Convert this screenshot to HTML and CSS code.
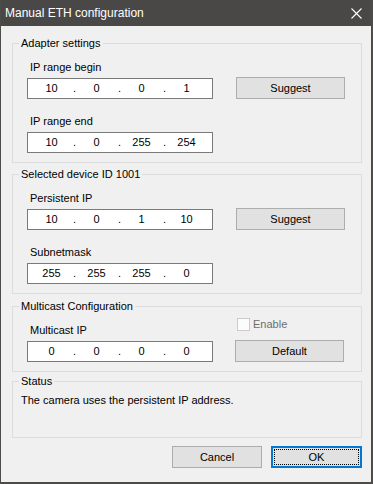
FILE: index.html
```html
<!DOCTYPE html>
<html>
<head>
<meta charset="utf-8">
<link rel="stylesheet" href="styles.css">
</head>
<body>
<div class="window">
  <div class="titlebar">
    <span class="title">Manual ETH configuration</span>
    <svg class="close" width="11" height="11" viewBox="0 0 11 11"><path d="M0.5 0.5L10.5 10.5M10.5 0.5L0.5 10.5" stroke="#ffffff" stroke-width="1.1" fill="none"/></svg>
  </div>
  <div class="content">
    <fieldset class="group g1">
      <legend>Adapter settings</legend>
      <div class="body">
        <div class="row">
          <div class="col">
            <div class="label">IP range begin</div>
            <div class="ip"><span class="oct">10</span><span class="dot">.</span><span class="oct">0</span><span class="dot">.</span><span class="oct">0</span><span class="dot">.</span><span class="oct">1</span></div>
          </div>
          <button class="btn side">Suggest</button>
        </div>
        <div class="row next">
          <div class="col">
            <div class="label">IP range end</div>
            <div class="ip"><span class="oct">10</span><span class="dot">.</span><span class="oct">0</span><span class="dot">.</span><span class="oct">255</span><span class="dot">.</span><span class="oct">254</span></div>
          </div>
        </div>
      </div>
    </fieldset>

    <fieldset class="group g2">
      <legend>Selected device ID 1001</legend>
      <div class="body">
        <div class="row">
          <div class="col">
            <div class="label">Persistent IP</div>
            <div class="ip"><span class="oct">10</span><span class="dot">.</span><span class="oct">0</span><span class="dot">.</span><span class="oct">1</span><span class="dot">.</span><span class="oct">10</span></div>
          </div>
          <button class="btn side">Suggest</button>
        </div>
        <div class="row next">
          <div class="col">
            <div class="label">Subnetmask</div>
            <div class="ip"><span class="oct">255</span><span class="dot">.</span><span class="oct">255</span><span class="dot">.</span><span class="oct">255</span><span class="dot">.</span><span class="oct">0</span></div>
          </div>
        </div>
      </div>
    </fieldset>

    <fieldset class="group g3">
      <legend>Multicast Configuration</legend>
      <div class="body">
        <div class="row mrow">
          <div class="col">
            <div class="label">Multicast IP</div>
            <div class="ip"><span class="oct">0</span><span class="dot">.</span><span class="oct">0</span><span class="dot">.</span><span class="oct">0</span><span class="dot">.</span><span class="oct">0</span></div>
          </div>
          <div class="rcol">
            <div class="check"><span class="box"></span><span class="ctext">Enable</span></div>
            <button class="btn side dflt">Default</button>
          </div>
        </div>
      </div>
    </fieldset>

    <fieldset class="group status">
      <legend>Status</legend>
      <div class="sbody">The camera uses the persistent IP address.</div>
    </fieldset>

    <div class="footer">
      <button class="btn dlg">Cancel</button>
      <button class="btn dlg ok">OK</button>
    </div>
  </div>
</div>
</body>
</html>
```
FILE: styles.css
```css
html, body {
  margin: 0;
  padding: 0;
  background: #f0f0f0;
}
.window {
  width: 373px;
  height: 484px;
  box-sizing: border-box;
  border-left: 1px solid #4e4c4a;
  border-right: 2px solid #4e4c4a;
  border-bottom: 2px solid #4e4c4a;
  background: #f0f0f0;
  font-family: "Liberation Sans", Arial, sans-serif;
  font-size: 11px;
  color: #000;
  display: flex;
  flex-direction: column;
}
.titlebar {
  height: 26px;
  background: #4a4846;
  color: #fff;
  display: flex;
  align-items: center;
  justify-content: space-between;
  padding: 0 9px 0 4px;
  flex: none;
}
.title {
  font-size: 12px;
  line-height: 26px;
}
.close {
  display: block;
}
.content {
  padding: 9px 9px 0 11px;
  display: flex;
  flex-direction: column;
}
.group {
  margin: 0;
  padding: 0;
  min-width: 0;
  border: 1px solid #dcdcdc;
}
.group legend {
  margin-left: 6px;
  padding: 0 2px;
  line-height: 16px;
  font-size: 11px;
}
.g2 { margin-top: 3px; }
.g3 { margin-top: 4px; }
.status { margin-top: 1px; }
.body {
  padding: 8px 0 9px 14px;
}
.row {
  display: flex;
  align-items: flex-end;
  gap: 23px;
}
.row.next {
  margin-top: 14px;
}
.col {
  display: flex;
  flex-direction: column;
}
.label {
  line-height: 16px;
  height: 16px;
  padding-left: 3px;
}
.ip {
  margin-top: 3px;
  width: 186px;
  height: 21px;
  box-sizing: border-box;
  border: 1px solid #7a7a7a;
  background: #fff;
  display: flex;
  align-items: center;
  padding-left: 4px;
  line-height: 19px;
}
.oct {
  width: 39px;
  text-align: center;
}
.dot {
  width: 6px;
  padding-left: 2px;
  box-sizing: border-box;
}
.btn {
  font-family: "Liberation Sans", Arial, sans-serif;
  font-size: 11px;
  color: #000;
  background: #e1e1e1;
  border: 1px solid #adadad;
  padding: 0;
  margin: 0;
  box-sizing: border-box;
}
.side {
  width: 109px;
  height: 22px;
}
.mrow {
  align-items: stretch;
}
.rcol {
  display: flex;
  flex-direction: column;
  justify-content: space-between;
  margin-top: -4px;
  margin-left: -1px;
}
.check {
  display: flex;
  align-items: center;
  height: 13px;
  padding-left: 2px;
}
.box {
  width: 13px;
  height: 13px;
  box-sizing: border-box;
  border: 1px solid #cccccc;
  background: #fcfcfc;
}
.ctext {
  margin-left: 3px;
  color: #6d6d6d;
  line-height: 13px;
}
.sbody {
  height: 48px;
  box-sizing: border-box;
  padding: 3px 0 0 8px;
  line-height: 16px;
}
.footer {
  margin-top: 8px;
  display: flex;
  justify-content: flex-end;
  gap: 9px;
}
.dlg {
  width: 90px;
  height: 22px;
}
.ok {
  width: 91px;
  border: 2px solid #0078d7;
  outline: 1px dotted #000;
  outline-offset: -4px;
}
```
